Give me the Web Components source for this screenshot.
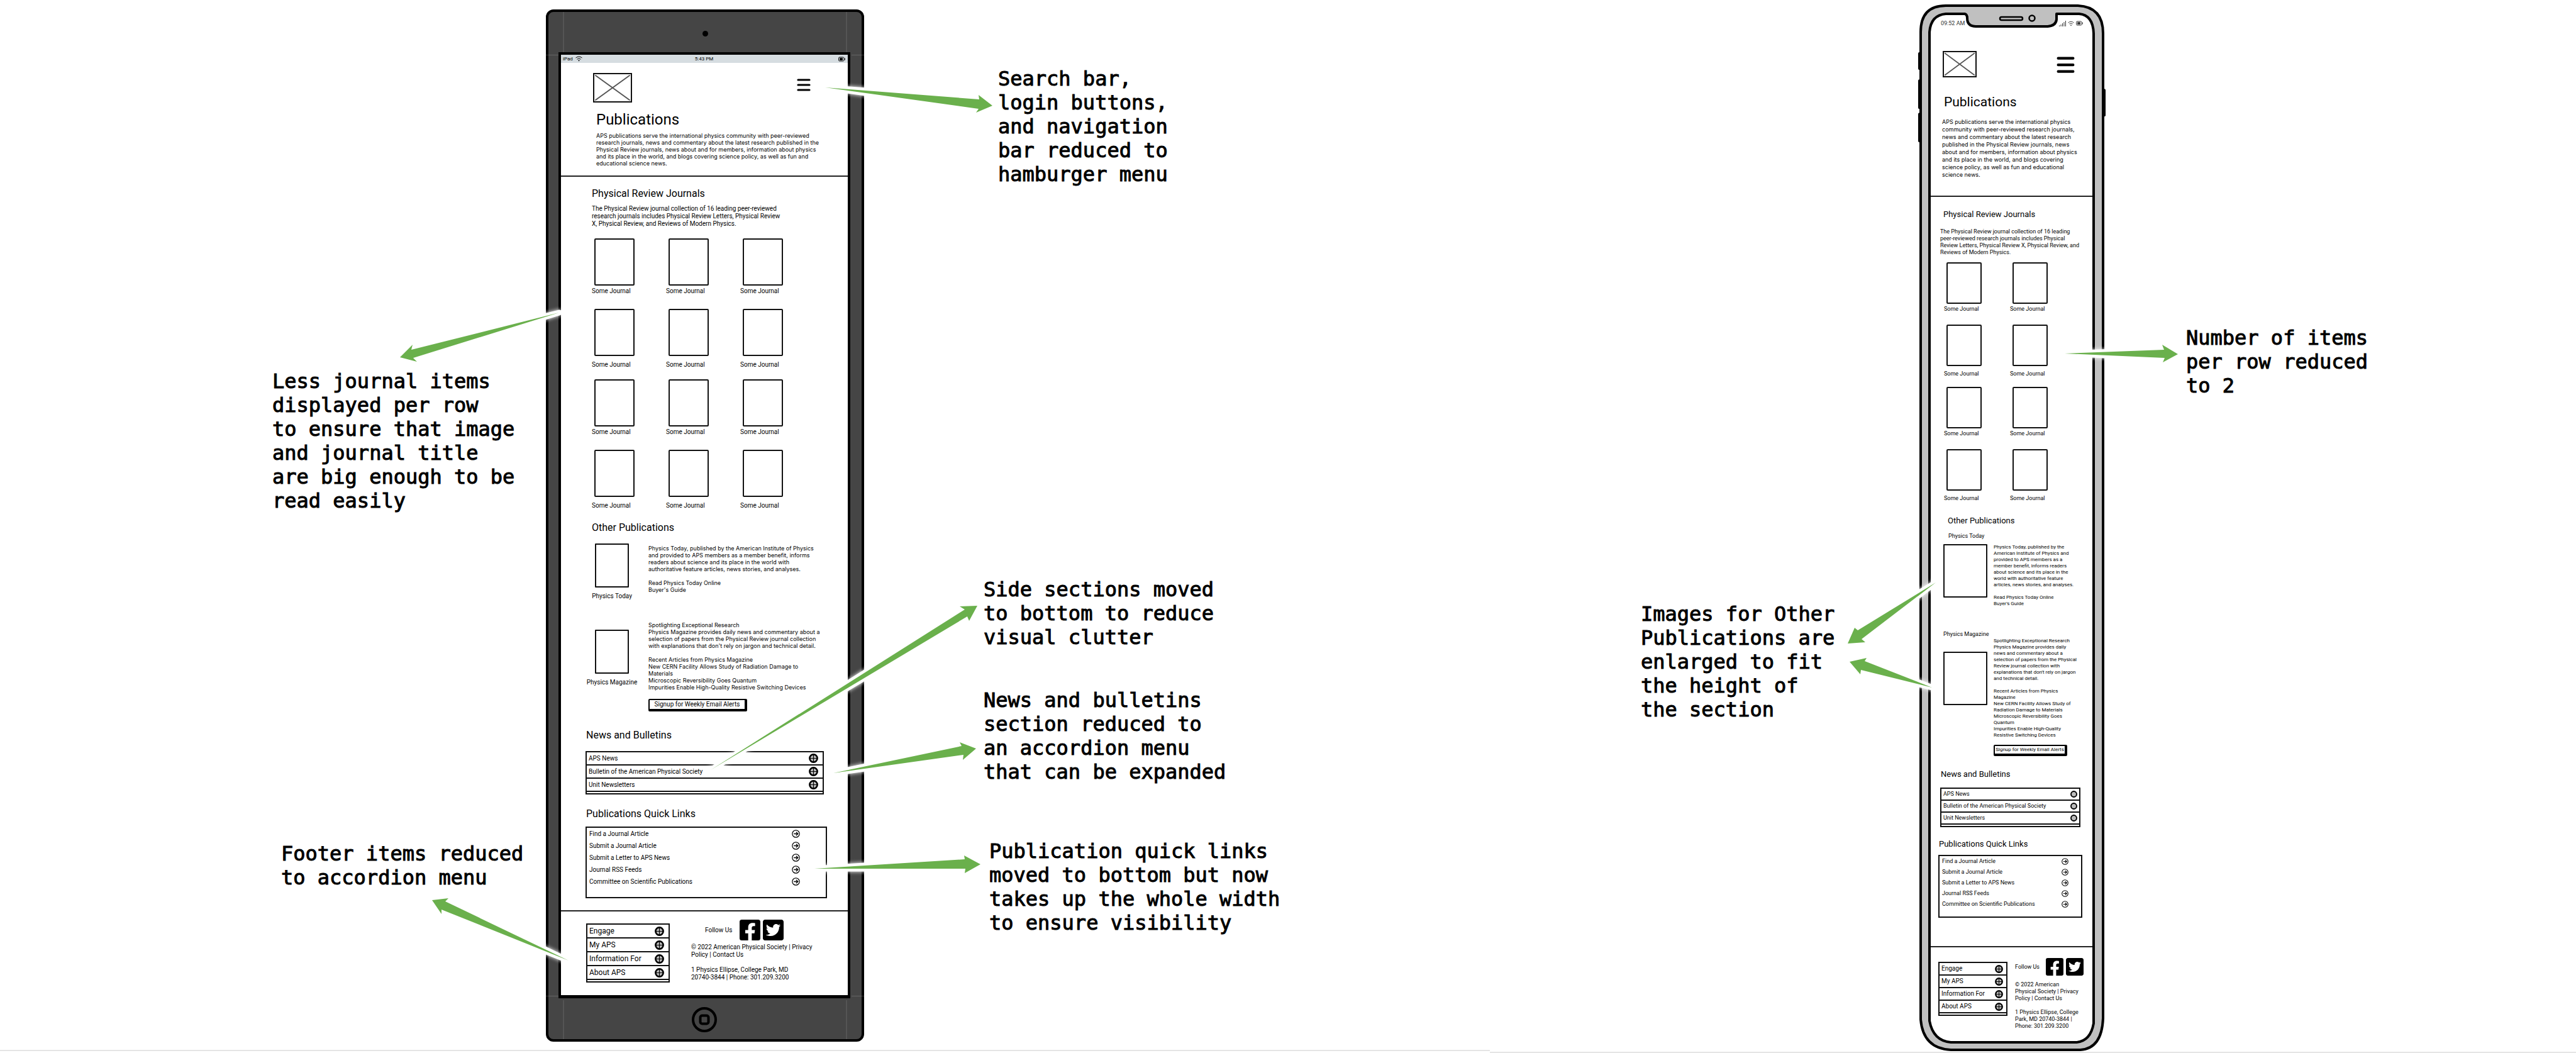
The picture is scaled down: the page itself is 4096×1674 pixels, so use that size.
<!DOCTYPE html>
<html lang="en">
<head>
<meta charset="utf-8">
<title>Publications wireframes</title>
<style>
  body { margin: 0; background: #fff; color: #000; font-family: Roboto, Lato, sans-serif; }
  .tablet page-footer { --menu-w: 133px; --menu-item: 12px/20px; --menu-pitch: 22px; --menu-dot: 15px; --menu-right: 7px; }
  .phone page-footer { --menu-w: 110px; --menu-item: 10px/18px; --menu-pitch: 20px; --menu-dot: 13px; --menu-right: 5px; }
</style>
</head>
<body>
<annotation-board>
  <device-panel slot="panel" class="tablet">
    <side-note slot="before" style="--top:587px;--left:433px">Less journal items<br>displayed per row<br>to ensure that image<br>and journal title<br>are big enough to be<br>read easily</side-note>
    <side-note slot="before" style="--top:523px;--left:447px">Footer items reduced<br>to accordion menu</side-note>

    <tablet-frame>
      <tablet-status></tablet-status>
      <page-header>
        <span slot="title">Publications</span>
        APS publications serve the international physics community with peer-reviewed<br>research journals, news and commentary about the latest research published in the<br>Physical Review journals, news about and for members, information about physics<br>and its place in the world, and blogs covering science policy, as well as fun and<br>educational science news.
      </page-header>
      <journal-section rows="4" columns="3">
        <span slot="title">Physical Review Journals</span>
        The Physical Review journal collection of 16 leading peer-reviewed<br>research journals includes Physical Review Letters, Physical Review<br>X, Physical Review, and Reviews of Modern Physics.
      </journal-section>
      <section-title class="other">Other Publications</section-title>
      <publication-row class="today">
        <span slot="name">Physics Today</span>
        Physics Today, published by the American Institute of Physics<br>and provided to APS members as a member benefit, informs<br>readers about science and its place in the world with<br>authoritative feature articles, news stories, and analyses.<br><br>Read Physics Today Online<br>Buyer's Guide
      </publication-row>
      <publication-row class="magazine">
        <span slot="name">Physics Magazine</span>
        Spotlighting Exceptional Research<br>Physics Magazine provides daily news and commentary about a<br>selection of papers from the Physical Review journal collection<br>with explanations that don't rely on jargon and technical detail.<br><br>Recent Articles from Physics Magazine<br>New CERN Facility Allows Study of Radiation Damage to<br>Materials<br>Microscopic Reversibility Goes Quantum<br>Impurities Enable High-Quality Resistive Switching Devices
        <signup-button slot="action">Signup for Weekly Email Alerts</signup-button>
      </publication-row>
      <section-title class="news">News and Bulletins</section-title>
      <accordion-menu class="news-menu" items="APS News|Bulletin of the American Physical Society|Unit Newsletters"></accordion-menu>
      <section-title class="quick">Publications Quick Links</section-title>
      <quick-links></quick-links>
      <page-footer>
        <accordion-menu slot="menu" class="footer-menu" items="Engage|My APS|Information For|About APS"></accordion-menu>
        © 2022 American Physical Society | Privacy<br>Policy | Contact Us<br><br>1 Physics Ellipse, College Park, MD<br>20740-3844 | Phone: 301.209.3200
      </page-footer>
    </tablet-frame>

    <side-note slot="after" style="--top:106px;--left:213px">Search bar,<br>login buttons,<br>and navigation<br>bar reduced to<br>hamburger menu</side-note>
    <side-note slot="after" style="--top:622px;--left:190px">Side sections moved<br>to bottom to reduce<br>visual clutter</side-note>
    <side-note slot="after" style="--top:62px;--left:190px">News and bulletins<br>section reduced to<br>an accordion menu<br>that can be expanded</side-note>
    <side-note slot="after" style="--top:88px;--left:199px">Publication quick links<br>moved to bottom but now<br>takes up the whole width<br>to ensure visibility</side-note>
  </device-panel>

  <device-panel slot="panel" class="phone">
    <side-note slot="before" style="--top:957px;--left:240px">Images for Other<br>Publications are<br>enlarged to fit<br>the height of<br>the section</side-note>

    <phone-frame>
      <phone-status></phone-status>
      <page-header>
        <span slot="title">Publications</span>
        APS publications serve the international physics<br>community with peer-reviewed research journals,<br>news and commentary about the latest research<br>published in the Physical Review journals, news<br>about and for members, information about physics<br>and its place in the world, and blogs covering<br>science policy, as well as fun and educational<br>science news.
      </page-header>
      <journal-section rows="4" columns="2">
        <span slot="title">Physical Review Journals</span>
        The Physical Review journal collection of 16 leading<br>peer-reviewed research journals includes Physical<br>Review Letters, Physical Review X, Physical Review, and<br>Reviews of Modern Physics.
      </journal-section>
      <section-title class="other">Other Publications</section-title>
      <publication-row class="today" stacked>
        <span slot="name">Physics Today</span>
        Physics Today, published by the<br>American Institute of Physics and<br>provided to APS members as a<br>member benefit, informs readers<br>about science and its place in the<br>world with authoritative feature<br>articles, news stories, and analyses.<br><br>Read Physics Today Online<br>Buyer's Guide
      </publication-row>
      <publication-row class="magazine" stacked>
        <span slot="name">Physics Magazine</span>
        Spotlighting Exceptional Research<br>Physics Magazine provides daily<br>news and commentary about a<br>selection of papers from the Physical<br>Review journal collection with<br>explanations that don't rely on jargon<br>and technical detail.<br><br>Recent Articles from Physics<br>Magazine<br>New CERN Facility Allows Study of<br>Radiation Damage to Materials<br>Microscopic Reversibility Goes<br>Quantum<br>Impurities Enable High-Quality<br>Resistive Switching Devices
        <signup-button slot="action">Signup for Weekly Email Alerts</signup-button>
      </publication-row>
      <section-title class="news">News and Bulletins</section-title>
      <accordion-menu class="news-menu" plain items="APS News|Bulletin of the American Physical Society|Unit Newsletters"></accordion-menu>
      <section-title class="quick">Publications Quick Links</section-title>
      <quick-links></quick-links>
      <page-footer>
        <accordion-menu slot="menu" class="footer-menu" items="Engage|My APS|Information For|About APS"></accordion-menu>
        © 2022 American<br>Physical Society | Privacy<br>Policy | Contact Us<br><br>1 Physics Ellipse, College<br>Park, MD 20740-3844 |<br>Phone: 301.209.3200
      </page-footer>
    </phone-frame>

    <side-note slot="after" style="--top:518px;--left:130px">Number of items<br>per row reduced<br>to 2</side-note>
  </device-panel>
  <callout-arrows slot="arrows"></callout-arrows>
</annotation-board>

<script>
// Registers an element whose shadow root is built from a stylesheet and a markup function.
function define(name, css, markup) {
  customElements.define(name, class extends HTMLElement {
    constructor() { super(); this.attachShadow({ mode: 'open' }); }
    connectedCallback() {
      this.shadowRoot.innerHTML =
        '<style>*{box-sizing:border-box}:host{display:block;box-sizing:border-box}h1,h2,p,ul{margin:0;padding:0;font-weight:400}ul{list-style:none}svg{display:block}button{font:inherit;color:inherit;background:none;border:0;padding:0;margin:0}' +
        css + '</style>' + markup(this);
    }
  });
}

define('annotation-board',
  ':host{position:relative;display:grid;grid-template-columns:minmax(0,2369fr) minmax(0,1727fr);min-height:100vh;background:#fff}',
  () => '<slot name="panel"></slot><slot name="arrows"></slot>');

define('device-panel', `
  :host{display:grid;align-items:start;border-bottom:2px solid #e5e5e5}
  :host(.tablet){grid-template-columns:minmax(0,868fr) minmax(0,506fr) minmax(0,995fr);margin-bottom:3px}
  :host(.phone){grid-template-columns:minmax(0,683fr) minmax(0,294fr) minmax(0,750fr)}
  .notes{display:flow-root}`,
  () => '<div class="notes"><slot name="before"></slot></div><slot></slot><div class="notes"><slot name="after"></slot></div>');

define('side-note', `
  :host{margin:var(--top) 0 0 var(--left);white-space:nowrap;font:32px/38px "DejaVu Sans Mono","Liberation Mono",monospace;-webkit-text-stroke:1px #000}`,
  () => '<slot></slot>');

define('callout-arrows', `
  :host{position:absolute;inset:0;pointer-events:none}
  svg{width:100%;height:auto}
  .halo{fill:#fff;stroke:#fff;stroke-width:9;stroke-linejoin:round;filter:drop-shadow(0 0 3px #fff)}
  .arrow{fill:#6ab04c}`,
  () => {
    const shapes = [
      '1312,139 1557,158 1556,151 1578,168 1552,179 1556,173',
      '889,497 654,556 656,548 636,568 663,575 657,569',
      '1130,1224 1534,969 1526,964 1554,963 1541,987 1538,980',
      '1325,1229 1529,1186 1526,1180 1552,1190 1531,1208 1532,1200',
      '1295,1381 1534,1366 1533,1360 1559,1374 1534,1388 1535,1381',
      '904,1527 708,1433 713,1428 687,1431 702,1453 702,1446',
      '3283,562 3441,556 3438,548 3463,563 3439,576 3442,569',
      '3078,926 2954,1002 2949,998 2938,1023 2966,1021 2960,1016',
      '3072,1093 2965,1051 2968,1046 2941,1052 2958,1072 2959,1065'
    ];
    return '<svg viewBox="0 0 4096 1674" aria-hidden="true">' +
      shapes.map(p => `<polygon class="halo" points="${p}"/>`).join('') +
      shapes.map(p => `<polygon class="arrow" points="${p}"/>`).join('') + '</svg>';
  });

define('tablet-frame', `
  :host{position:relative;margin-top:15px;background:#454545;border:4px solid #000;border-radius:12px;padding:64px 18px 0 16px;
    --h1:24px/30px;--h1-space:12px 0 5px 5px;--copy:9px/11px Inter;--copy-left:5px;
    --head-pad:16px 59px 14px 51px;--pic-w:62px;--pic-h:47px;--burger:22px;
    --h2:16px/20px;--lead:10px/12px;--journal-pad:17px 0 0 49px;--lead-space:8px 0 17px;
    --cell:64px;--cell-h:75px;--gap:54px;--row:112px;--grid-left:4px;--label:10px/12px;--tight:3px;--loose:8px;
    --thumb-w:54px;--thumb-h:70px;--body:9px/11px Inter;--button:10px/14px;--button-w:157px;--button-h:20px;--button-top:13px;
    --link:10px/19px;--link-h:114px;--link-left:4px;--link-right:41px;--ring:13px;
    --foot-pad:13px 0 20px 40px;--foot-gap:34px;--follow-left:22px;--follow-gap:12px;--follow-bottom:5px;--social:33px;--legal:10px/12px}
  .camera{position:absolute;top:30px;left:calc(50% - 4px);width:9px;height:9px;border-radius:50%;background:#000}
  .seams{position:absolute;inset:-4px;width:calc(100% + 8px);height:calc(100% + 8px);pointer-events:none;stroke:#fff;stroke-opacity:.18}
  .screen{background:#fff;border:4px solid #000;border-width:4px 4px 5px}
  .home{display:block;margin:14px auto 11px}
  ::slotted(.other){margin:2px 0 15px 49px}
  ::slotted(.magazine){margin-top:34px;--pic-top:13px}
  ::slotted(.today){--text-top:2px}
  ::slotted(.news){margin:28px 0 15px 40px}
  ::slotted(.news-menu){margin:0 38px 0 39px;--item:10px/19px;--pitch:21px;--dot:15px;--dot-right:7px}
  ::slotted(.quick){margin:21px 0 10px 40px}
  ::slotted(quick-links){margin:0 33px 19px 39px}`,
  () => `<svg class="seams" viewBox="0 0 506 1640" preserveAspectRatio="none"><path fill="none" d="M28 4V68M478 4V68M0 72.500H20M486 72.500H506M28 1574V1636M478 1574V1636M0 1567.500H20M486 1567.500H506"/></svg>
    <div class="camera"></div><div class="screen"><slot></slot></div>
    <button class="home" aria-label="Home"><svg width="40" height="40" viewBox="0 0 40 40" fill="none" stroke="#000"><circle cx="20" cy="20" r="18" stroke-width="4"/><rect x="13.500" y="13.500" width="13" height="13" rx="3" stroke-width="4"/></svg></button>`);

const wifi = w => `<svg width="${w}" height="9" viewBox="0 0 11 9" fill="none" stroke="currentColor"><path d="M.5 3Q5.500-1 10.500 3M2.500 5.200Q5.500 2.600 8.500 5.200"/><circle cx="5.500" cy="7.300" r="1" fill="currentColor" stroke="none"/></svg>`;
const battery = '<svg width="11" height="8" viewBox="0 0 11 8" fill="none" stroke="currentColor"><rect x=".5" y="1" width="8.500" height="6" rx="1.500"/><rect x="2.500" y="2.800" width="4" height="2.400" fill="currentColor"/><path d="M10.300 2.500v3"/></svg>';

define('tablet-status', `
  :host{display:grid;grid-template-columns:1fr auto 1fr;align-items:center;height:13px;padding:0 4px 0 3px;background:#d6dde1;font-size:8px;line-height:12px}
  .left{display:flex;gap:4px;align-items:center}.right{justify-self:end}`,
  () => `<span class="left">iPad ${wifi(11)}</span><span>5:43 PM</span><span class="right">${battery}</span>`);

define('phone-status', `
  :host{display:flex;justify-content:space-between;align-items:center;padding:0 15px 0 16px;font-size:9px;line-height:12px;color:#333}
  .icons{display:flex;gap:3px;align-items:center}`,
  () => `<span>09:52 AM</span><span class="icons"><svg width="11" height="9" viewBox="0 0 11 9" stroke="#333" fill="none"><path d="M.5 9V7.500M3 9V6M5.500 9V4M8 9V2M10.500 9V0"/></svg>${wifi(10)}${battery}</span>`);

define('phone-frame', `
  :host{position:relative;margin-top:7px;padding:24px 19px 34px 18px;
    --h1:21px/26px;--h1-space:26px 0 13px 2px;--copy:9px/12px Inter;--copy-left:-1px;
    --head-pad:38px 28px 27px 19px;--pic-w:54px;--pic-h:42px;--burger:29px;
    --h2:13px/18px;--lead:9px/11px;--journal-pad:19px 0 0 15px;--h2-left:5px;--lead-space:13px 0 10px;
    --cell:56px;--cell-h:66px;--gap:49px;--row:99px;--grid-left:10px;--label:9px/12px;--tight:2px;--loose:6px;
    --thumb-w:70px;--thumb-h:85px;--body:8px/10px Roboto;--button:8px/12px;--button-w:117px;--button-h:18px;--button-top:10px;
    --link:9px/17px;--link-h:100px;--link-left:4px;--link-right:20px;--ring:11px;
    --foot-pad:17px 0 0 12px;--foot-gap:12px;--follow-left:0px;--follow-gap:10px;--follow-bottom:9px;--social:28px;--legal:9px/11px}
  .frame{position:absolute;inset:0;width:100%;height:100%;overflow:visible}
  .content{position:relative}
  ::slotted(.other){margin:6px 0 9px 27px}
  ::slotted(.today){--name-left:8px}
  ::slotted(.magazine){margin-top:37px;--pic-top:22px;--name-space:0px}
  ::slotted(.news){margin:20px 0 12px 16px}
  ::slotted(.news-menu){margin:0 19px 0 15px;--item:9px/17px;--pitch:19px;--dot:11px;--dot-right:3px}
  ::slotted(.quick){margin:18px 0 8px 13px}
  ::slotted(quick-links){margin:0 16px 45px 12px}`,
  () => `<svg class="frame" viewBox="0 0 294 1662" preserveAspectRatio="none">
      <path d="M0 78V102M0 121V164M0 174V217" stroke="#000" stroke-width="4" stroke-linecap="round"/><path d="M294 136V176" stroke="#000" stroke-width="4" stroke-linecap="round"/>
      <path d="M2 44Q2 2 42 2H252Q292 4 292 46V1610Q290 1658 256 1660H50Q6 1658 2 1612Z" fill="#c0c0c0" stroke="#000" stroke-width="4"/>
      <path d="M16 44Q18 17 42 15H72Q76 16 76 22Q76 35 90 35H204Q217 34 218 24V15H254Q276 17 277 46V1618Q272 1646 250 1648H50Q22 1646 16 1614Z" fill="#fff" stroke="#000" stroke-width="4" stroke-linejoin="round"/>
      <rect x="128" y="20" width="36" height="5" rx="2.500" fill="none" stroke="#000" stroke-width="2.500"/><circle cx="179" cy="22" r="4.500" fill="none" stroke="#000" stroke-width="2.500"/>
    </svg><div class="content"><slot></slot></div>`);

define('page-header', `
  :host{padding:var(--head-pad);border-bottom:2px solid #222}
  .top{display:flex;justify-content:space-between;align-items:flex-start}
  .pic{width:var(--pic-w);height:var(--pic-h);border:2px solid #111}
  .pic svg{width:100%;height:100%}
  .burger{width:var(--burger);margin-top:9px}.burger svg{width:100%;height:auto}
  h1{font:var(--h1) Roboto,sans-serif;margin:var(--h1-space);white-space:nowrap}
  p{font:var(--copy),sans-serif;margin-left:var(--copy-left);white-space:nowrap}`,
  () => `<div class="top"><div class="pic"><svg viewBox="0 0 58 43" preserveAspectRatio="none" stroke="#555" stroke-width="2" stroke-linecap="round"><path d="M2 2L56 41M56 2L2 41"/></svg></div>
    <button class="burger" aria-label="Menu"><svg viewBox="0 0 22 20" stroke="#000" stroke-width="3.200" stroke-linecap="round"><path d="M2 2H20M2 10H20M2 18H20"/></svg></button></div>
    <h1><slot name="title"></slot></h1><p><slot></slot></p>`);

define('section-title', 'h2{font:var(--h2) Roboto,sans-serif;white-space:nowrap}', () => '<h2><slot></slot></h2>');

define('journal-item', `
  .cover{height:var(--cell-h);border:2px solid #111;border-radius:2px}
  a{display:block;margin:var(--tight) 0 0 -4px;font:var(--label) Roboto,sans-serif;white-space:nowrap;color:inherit;text-decoration:none}
  :host([loose]) a{margin-top:var(--loose)}`,
  () => '<div class="cover"></div><a href="#journal">Some Journal</a>');

define('journal-section', `
  :host{padding:var(--journal-pad)}
  h2{font:var(--h2) Roboto,sans-serif;white-space:nowrap;margin-left:var(--h2-left,0)}
  p{font:var(--lead) Roboto,sans-serif;margin:var(--lead-space);white-space:nowrap}
  .grid{display:grid;grid-auto-rows:var(--row);column-gap:var(--gap);margin-left:var(--grid-left)}`,
  host => {
    const cols = +host.getAttribute('columns'), rows = +host.getAttribute('rows');
    const items = Array.from({ length: cols * rows }, (_, i) => `<journal-item${Math.floor(i / cols) % 2 ? ' loose' : ''}></journal-item>`).join('');
    return `<h2><slot name="title"></slot></h2><p><slot></slot></p><div class="grid" style="grid-template-columns:repeat(${cols},var(--cell))">${items}</div>`;
  });

define('publication-row', `
  :host{display:flex;gap:16px;padding-left:39px}
  .figure{width:84px;display:flex;flex:none;flex-direction:column;align-items:center;gap:8px;padding-top:var(--pic-top,0)}
  .thumb{flex:none;width:var(--thumb-w);height:var(--thumb-h);border:2px solid #111;border-radius:1px}
  .name{font:var(--label) Roboto,sans-serif;white-space:nowrap}
  .text{padding-top:var(--text-top,0)}
  p{font:var(--body),sans-serif;white-space:nowrap}
  :host([stacked]){display:grid;grid-template-columns:70px 1fr;gap:var(--name-space,7px) 10px;padding-left:20px}
  :host([stacked]) .figure{display:contents}
  :host([stacked]) .name{order:-1;grid-column:1/-1;margin-left:var(--name-left,0)}
  :host([stacked]) .thumb{margin-top:var(--pic-top,0)}`,
  () => '<div class="figure"><div class="thumb"></div><div class="name"><slot name="name"></slot></div></div><div class="text"><p><slot></slot></p><slot name="action"></slot></div>');

define('signup-button', `
  :host{margin-top:var(--button-top)}
  button{display:block;width:var(--button-w);height:var(--button-h);border:2px solid #000;border-width:2px 4px 4px 2px;border-radius:2px;font:var(--button) Roboto,sans-serif;white-space:nowrap;text-align:center}`,
  () => '<button type="button"><slot></slot></button>');

define('accordion-menu', `
  ul{border:2px solid #111;padding-bottom:2px;background:#fff}
  button{display:flex;justify-content:space-between;align-items:center;width:100%;height:var(--pitch);padding:0 var(--dot-right) 0 3px;border-bottom:2px solid #111;font:var(--item) Roboto,sans-serif;white-space:nowrap}
  svg{width:var(--dot);height:var(--dot)}`,
  host => {
    const cross = host.hasAttribute('plain') ? '' : '<path d="M8 2V14M2 8H14" stroke-width="1.300"/>';
    return '<ul>' + host.getAttribute('items').split('|').map(t =>
      `<li><button type="button" aria-expanded="false"><span>${t}</span><svg viewBox="0 0 16 16" fill="#bcbcbc" stroke="#000"><circle cx="8" cy="8" r="6.500" stroke-width="2.800"/>${cross}</svg></button></li>`).join('') + '</ul>';
  });

define('quick-links', `
  ul{height:var(--link-h);border:2px solid #111}
  a{display:flex;justify-content:space-between;align-items:center;padding:0 var(--link-right) 0 var(--link-left);font:var(--link) Roboto,sans-serif;white-space:nowrap;color:inherit;text-decoration:none}
  svg{width:var(--ring);height:var(--ring)}`,
  () => '<ul>' + ['Find a Journal Article', 'Submit a Journal Article', 'Submit a Letter to APS News', 'Journal RSS Feeds', 'Committee on Scientific Publications'].map(t =>
    `<li><a href="#links"><span>${t}</span><svg viewBox="0 0 16 16" fill="none" stroke="#000"><circle cx="8" cy="8" r="7" stroke-width="1.500"/><path d="M4 8H12M8.500 4.500L12 8L8.500 11.500" stroke-width="1.700"/></svg></a></li>`).join('') + '</ul>');

define('page-footer', `
  :host{display:flex;align-items:flex-start;gap:var(--foot-gap);padding:var(--foot-pad);border-top:2px solid #222}
  ::slotted(.footer-menu){flex:none;margin-top:6px;width:var(--menu-w);--item:var(--menu-item);--pitch:var(--menu-pitch);--dot:var(--menu-dot);--dot-right:var(--menu-right)}
  .follow{display:flex;align-items:center;padding-left:var(--follow-left);margin-bottom:var(--follow-bottom);font:var(--legal) Roboto,sans-serif;white-space:nowrap}
  .follow span{margin-right:var(--follow-gap)}
  .follow a+a{margin-left:4px}
  .follow svg{width:var(--social);height:var(--social)}
  p{font:var(--legal) Roboto,sans-serif;white-space:nowrap}`,
  () => `<slot name="menu"></slot><div><div class="follow"><span>Follow Us</span>
    <a href="#facebook" aria-label="Facebook"><svg viewBox="0 32 448 448"><path d="M400 32H48A48 48 0 0 0 0 80v352a48 48 0 0 0 48 48h137.250V327.690h-63V256h63v-54.640c0-62.150 37-96.480 93.670-96.480 27.140 0 55.520 4.840 55.520 4.840v61h-31.270c-30.810 0-40.420 19.120-40.420 38.730V256h68.780l-11 71.690h-57.780V480H400a48 48 0 0 0 48-48V80a48 48 0 0 0-48-48z"/></svg></a>
    <a href="#twitter" aria-label="Twitter"><svg viewBox="0 32 448 448"><path d="M400 32H48C21.500 32 0 53.500 0 80v352c0 26.500 21.500 48 48 48h352c26.500 0 48-21.500 48-48V80c0-26.500-21.500-48-48-48zm-48.900 158.800c.2 2.800.2 5.700.2 8.500 0 86.700-66 186.600-186.600 186.600-37.200 0-71.700-10.800-100.700-29.400 5.300.6 10.400.8 15.800.8 30.700 0 58.900-10.400 81.400-28-28.800-.6-53-19.500-61.300-45.500 10.100 1.500 19.200 1.500 29.600-1.200-30-6.100-52.500-32.500-52.500-64.400v-.8c8.700 4.900 18.900 7.900 29.600 8.300a65.447 65.447 0 0 1-29.200-54.600c0-12.200 3.200-23.400 8.900-33.100 32.300 39.800 80.800 65.800 135.200 68.600-9.300-44.500 24-80.600 64-80.600 18.900 0 35.900 7.900 47.900 20.700 14.800-2.800 29-8.300 41.600-15.800-4.900 15.200-15.200 28-28.800 36.100 13.200-1.400 26-5.100 37.800-10.200-8.900 13.100-20.100 24.700-32.900 34z"/></svg></a></div>
    <p><slot></slot></p></div>`);
</script>
</body>
</html>
